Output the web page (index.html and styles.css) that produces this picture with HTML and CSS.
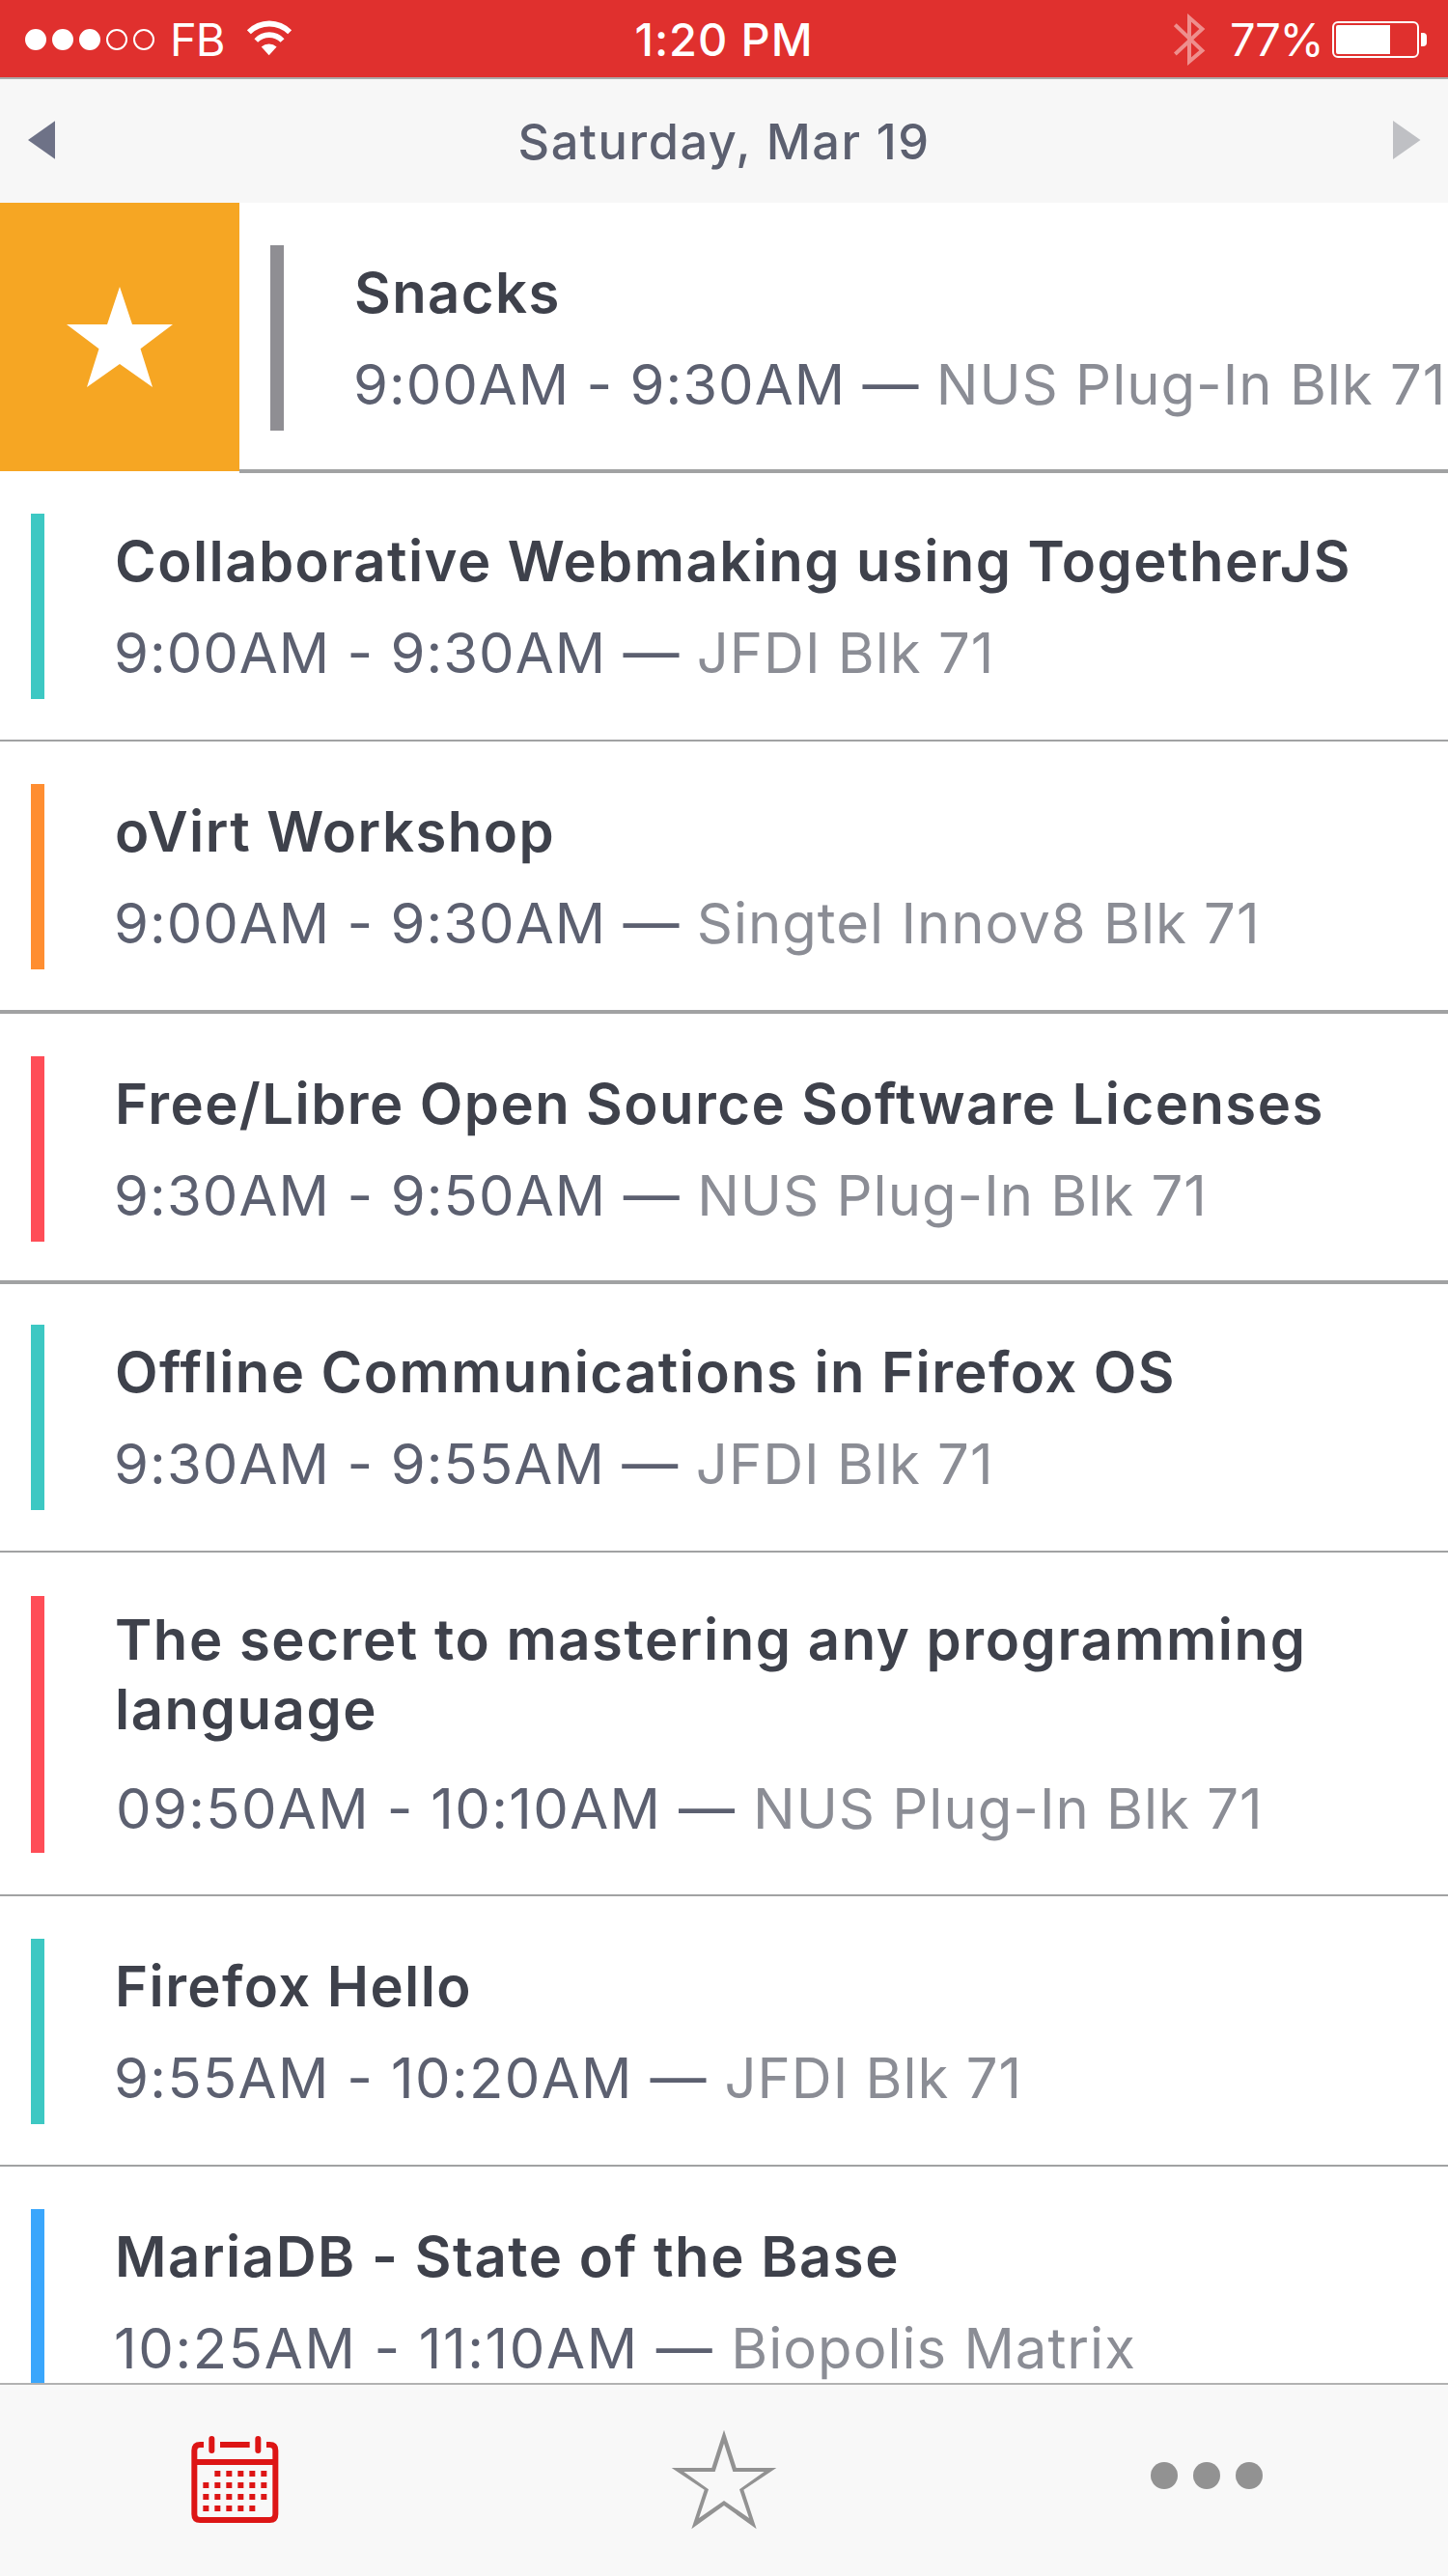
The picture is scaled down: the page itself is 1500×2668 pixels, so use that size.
FILE: index.html
```html
<!DOCTYPE html>
<html lang="en">
<head>
<meta charset="utf-8">
<title>Schedule</title>
<link rel="stylesheet" href="styles.css">
</head>
<body>
<div class="app">
  <header class="status">
    <div class="status-left">
      <div class="signal"><i class="on"></i><i class="on"></i><i class="on"></i><i></i><i></i></div>
      <span class="carrier">FB</span>
      <svg class="wifi" viewBox="766 64 144 112" fill="#fff"><path d="M768 95A97 97 0 0 1 908 95L896 107A84 84 0 0 0 780 107Z"/><path d="M791 122A63 63 0 0 1 885 122L873 133A50 50 0 0 0 802 133Z"/><path d="M813 147A36 36 0 0 1 861 147L837 174Z"/></svg>
    </div>
    <span class="clock">1:20 PM</span>
    <div class="status-right">
      <svg class="bluetooth" viewBox="648 42 99 162" fill="none" stroke="#fff" stroke-opacity=".46" stroke-width="12"><path d="M652 77L736 157L696 191V55L736 90L652 168"/></svg>
      <span class="percent">77%</span>
      <div class="battery"><div class="charge"></div></div>
      <div class="nub"></div>
    </div>
  </header>
  <nav class="datebar">
    <svg class="arrow" viewBox="0 0 28.5 40"><path d="M28.5 0V40L0 20Z" fill="#6e7287"/></svg>
    <h1 class="date">Saturday, Mar 19</h1>
    <svg class="arrow" viewBox="0 0 28.5 40"><path d="M0 0V40L28.5 20Z" fill="#bfc0c4"/></svg>
  </nav>
  <main class="list">
    <div class="swipe">
      <div class="favorite"><svg class="favorite-star" viewBox="0 0 110 104"><path d="M55 0L68 39H110L76.5 64.300L89 104L55 80L21 104L33.500 64.300L0 39H42Z" fill="#fff"/></svg></div>
      <article class="row thick flush"><div class="bar gray"></div><div class="info"><h2 class="title">Snacks</h2><p class="meta">9:00AM - 9:30AM — <span class="place">NUS Plug-In Blk 71</span></p></div></article>
    </div>
    <article class="row short"><div class="bar teal"></div><div class="info"><h2 class="title">Collaborative Webmaking using TogetherJS</h2><p class="meta">9:00AM - 9:30AM — <span class="place">JFDI Blk 71</span></p></div></article>
    <article class="row thick"><div class="bar orange"></div><div class="info"><h2 class="title">oVirt Workshop</h2><p class="meta">9:00AM - 9:30AM — <span class="place">Singtel Innov8 Blk 71</span></p></div></article>
    <article class="row thick flush"><div class="bar red"></div><div class="info"><h2 class="title">Free/Libre Open Source Software Licenses</h2><p class="meta"><span class="time">9:30AM - 9:50AM — </span><span class="place">NUS Plug-In Blk 71</span></p></div></article>
    <article class="row short"><div class="bar teal"></div><div class="info"><h2 class="title">Offline Communications in Firefox OS</h2><p class="meta"><span class="time">9:30AM - 9:55AM — </span><span class="place">JFDI Blk 71</span></p></div></article>
    <article class="row tall"><div class="bar red"></div><div class="info"><h2 class="title open">The secret to mastering any programming<br>language</h2><p class="meta indent"><span class="time wide">09:50AM - 10:10AM — </span><span class="place">NUS Plug-In Blk 71</span></p></div></article>
    <article class="row"><div class="bar teal"></div><div class="info"><h2 class="title">Firefox Hello</h2><p class="meta"><span class="time wide">9:55AM - 10:20AM — </span><span class="place">JFDI Blk 71</span></p></div></article>
    <article class="row"><div class="bar blue"></div><div class="info"><h2 class="title open">MariaDB - State of the Base</h2><p class="meta"><span class="time widest">10:25AM - 11:10AM — </span><span class="place">Biopolis Matrix</span></p></div></article>
  </main>
  <footer class="tabs">
    <div class="tab tab-calendar">
      <svg class="calendar" viewBox="144 219 273 270" fill="none" stroke="#dd1515" stroke-width="18"><path d="M183 246H172Q154 246 154 264V462Q154 480 172 480H388Q406 480 406 462V264Q406 246 388 246H378M234 246H326M154 300H406"/><path d="M208 228V264M352 228V264" stroke-linecap="round"/><path d="M217 336H381M181 372H381M181 408H381M181 444H345" stroke-dasharray="18 18"/></svg>
    </div>
    <div class="tab tab-star">
      <svg class="star" viewBox="135 198 330 312"><path fill="#929292" fill-rule="evenodd" d="M300 200L338 318H463L361 386L401 508L300 435L199 508L239 386L137 318H262ZM300 242L272 330H175L252 385L222 474L300 420L378 474L348 385L425 330H328Z"/></svg>
    </div>
    <div class="tab tab-more"><i></i><i></i><i></i></div>
  </footer>
</div>
</body>
</html>
```
FILE: styles.css
```css
* { box-sizing: border-box; }
body { margin: 0; font-family: Inter, "Liberation Sans", sans-serif; background: #fff; }
h1, h2, p { margin: 0; font-weight: inherit; }
svg { display: block; flex: none; }

.app { width: 1500px; height: 2668px; display: flex; flex-direction: column; overflow: hidden; }

.status { height: 82px; flex: none; display: grid; grid-template-columns: 1fr auto 1fr; background: #e0302e; border-bottom: 2px solid #aaa; color: #fff; font-size: 47px; line-height: 82px; white-space: nowrap; }
.status-left, .status-right { display: flex; align-items: center; height: 82px; }
.status-left { padding-left: 26px; }
.status-right { justify-content: flex-end; padding-right: 22px; }
.signal { display: flex; gap: 6px; }
.signal i { width: 22px; height: 22px; border: 2px solid #fff; border-radius: 50%; }
.signal .on { background: #fff; }
.carrier { width: 95px; padding-left: 16px; letter-spacing: -1px; }
.wifi { width: 48px; height: 37px; margin: 0 0 3px 0; }
.clock { font-weight: 500; letter-spacing: 0.9px; }
.bluetooth { width: 33px; height: 54px; margin-right: 25px; }
.percent { width: 106px; letter-spacing: -1.3px; }
.battery { width: 90px; height: 38px; padding: 2px; border: 2px solid #fff; border-radius: 6px; }
.charge { width: 56px; height: 30px; background: #fff; border-radius: 2px 0 0 2px; }
.nub { width: 6px; height: 14px; margin-left: 2px; background: #fff; border-radius: 0 4px 4px 0; }

.datebar { height: 128px; flex: none; display: flex; align-items: center; justify-content: space-between; padding: 0 28.5px; background: #f7f7f7; }
.arrow { width: 28.5px; height: 40px; margin-bottom: 2px; }
.date { font-size: 50.5px; font-weight: 500; letter-spacing: 1.55px; color: #5c6070; }

.list { flex: 1; min-height: 0; overflow: hidden; }
.swipe { display: flex; height: 280px; }
.favorite { width: 248px; height: 278px; flex: none; display: flex; align-items: center; justify-content: center; background: #f6a623; }
.favorite-star { width: 110px; height: 104px; }
.swipe .row { flex: none; width: 1500px; }
.row { display: flex; gap: 72px; padding: 44px 0 42px 32px; border-bottom: 2px solid #a1a2a3; }
.row.thick { border-bottom-width: 4px; }
.row.flush { padding-bottom: 40px; }
.row.short { padding-top: 42px; }
.bar { width: 14px; flex: none; }
.gray { background: #8f8e93; }
.teal { background: #3dc8c3; }
.orange { background: #ff8e31; }
.red { background: #ff4d57; }
.blue { background: #3aa6fc; }
.info { height: 192px; padding-top: 13px; white-space: nowrap; }
.title { padding-left: 1px; font-size: 58px; line-height: 72px; font-weight: 600; letter-spacing: 1.44px; color: #3e414b; }
.title.open { letter-spacing: 1.56px; }
.meta { margin-top: 23px; font-size: 58px; line-height: 72px; letter-spacing: 1px; color: #5c6070; }
.meta.indent { padding-left: 2px; }
.time { letter-spacing: 1.1px; }
.time.wide { letter-spacing: 1.35px; }
.time.widest { letter-spacing: 1.65px; }
.place { color: #8b8d95; }
.row.tall { padding: 45px 0 43px 32px; }
.tall .info { height: 266px; padding-top: 9px; }
.tall .meta { margin-top: 31px; }

.tabs { height: 200px; flex: none; display: grid; grid-template-columns: repeat(3, 1fr); background: #f8f8f8; border-top: 2px solid #b2b2b2; }
.tab { display: flex; justify-content: center; align-items: flex-start; }
.tab-calendar { padding: 53px 13px 0 0; }
.calendar { width: 91px; height: 90px; }
.tab-star { padding-top: 46px; }
.star { width: 110px; height: 104px; }
.tab-more { gap: 16px; padding-top: 80px; }
.tab-more i { width: 28px; height: 28px; border-radius: 50%; background: #929292; }
```
